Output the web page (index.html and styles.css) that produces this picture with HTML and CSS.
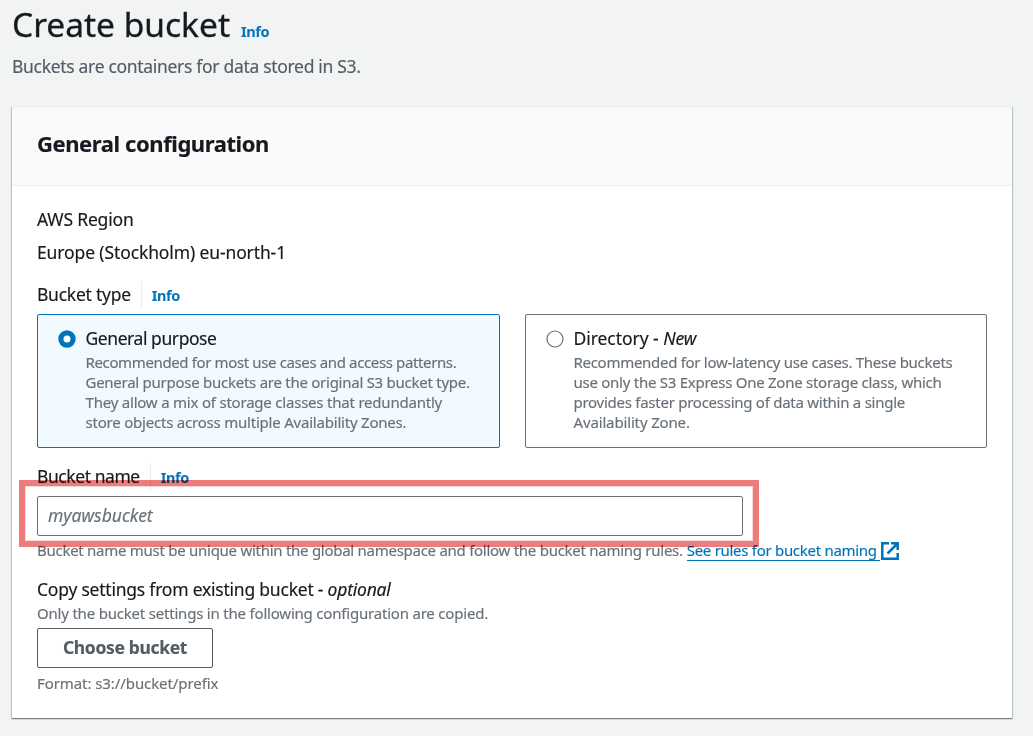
FILE: index.html
```html
<!DOCTYPE html>
<html lang="en">
<head>
<meta charset="utf-8">
<title>Create bucket</title>
<link rel="stylesheet" href="styles.css">
</head>
<body>
<main class="page">
  <header class="page-header">
    <h1 class="title"><span class="title-text">Create bucket</span> <a class="info">Info</a></h1>
    <p class="subtitle">Buckets are containers for data stored in S3.</p>
  </header>
  <section class="card">
    <div class="card-header"><h2 class="heading">General configuration</h2></div>
    <div class="card-body">
      <div class="label t-region">AWS Region</div>
      <div class="label region-value">Europe (Stockholm) eu-north-1</div>
      <div class="label-row type-row"><span class="label t-type">Bucket type</span><a class="info split">Info</a></div>
      <div class="tiles">
        <div class="tile selected">
          <svg class="radio" viewBox="0 0 18 18"><circle cx="9" cy="9" r="6.1" fill="#fff" stroke="#0073bb" stroke-width="5.2"/></svg>
          <div>
            <div class="label t-general">General purpose</div>
            <div class="hint"><span class="g1">Recommended for most use cases and access patterns.</span><br><span class="g2">General purpose buckets are the original S3 bucket type.</span><br><span class="g3">They allow a mix of storage classes that redundantly</span><br><span class="g4">store objects across multiple Availability Zones.</span></div>
          </div>
        </div>
        <div class="tile">
          <svg class="radio" viewBox="0 0 18 18"><circle cx="9" cy="9" r="8" fill="#fff" stroke="#687078" stroke-width="1.2"/></svg>
          <div>
            <div class="label t-directory">Directory - <i>New</i></div>
            <div class="hint"><span class="d1">Recommended for low-latency use cases. These buckets</span><br><span class="d2">use only the S3 Express One Zone storage class, which</span><br><span class="d3">provides faster processing of data within a single</span><br><span class="d4">Availability Zone.</span></div>
          </div>
        </div>
      </div>
      <div class="name-field">
        <div class="label-row"><span class="label t-name">Bucket name</span><a class="info split">Info</a></div>
        <div class="input">myawsbucket</div>
        <div class="hint rules"><span class="r1">Bucket name must be unique within the global namespace and follow the bucket naming rules.</span><a class="link"><span class="r2">See rules for bucket naming</span></a><svg class="external" viewBox="0 0 18 18" fill="none" stroke="#0073bb" stroke-width="2.5"><path d="M8 1.3H1.3v15.4h15.4V11M10 1.3h6.7V8M16.5 1.5L6.5 11.5"/></svg></div>
        <div class="highlight"></div>
      </div>
      <div class="label t-copy">Copy settings from existing bucket - <i>optional</i></div>
      <div class="hint t-only">Only the bucket settings in the following configuration are copied.</div>
      <button class="button">Choose bucket</button>
      <div class="hint t-format">Format: s3://bucket/prefix</div>
    </div>
  </section>
</main>
</body>
</html>
```
FILE: styles.css
```css
* { box-sizing: border-box; }
body { margin: 0; background: #f2f3f3; color: #16191f; font-family: "Noto Sans", "Open Sans", sans-serif; font-size: 17.5px; white-space: nowrap; -webkit-text-stroke: 0.15px; }
h1, h2, p { margin: 0; font-weight: 400; }
.page { height: 736px; padding: 0 21px 0 12px; overflow: hidden; }
.page-header { height: 106px; }
.title { height: 54px; display: flex; align-items: baseline; gap: 11px; font-size: 33.5px; line-height: 48px; -webkit-text-stroke: 0.3px #16191f; }
.info { color: #0073bb; font-size: 14.5px; font-weight: 700; line-height: 20px; letter-spacing: -0.4px; -webkit-text-stroke: 0; }
.subtitle { color: #545b64; line-height: 25px; letter-spacing: -0.31px; }
.card { height: 612px; background: #fff; box-shadow: 0 1px 1px #7b8788, -1px 1px 1px #c9d0d1, 1px 1px 1px #c9d0d1; }
.card-header { height: 80px; padding: 21px 25px 0; background: #fafafa; border-top: 1px solid #eaeded; border-bottom: 1px solid #eaeded; }
.heading { font-size: 22px; font-weight: 700; line-height: 30px; letter-spacing: -0.42px; }
.card-body { padding: 21px 25px 0; }
.label { height: 25px; line-height: 25px; }
.region-value { margin-top: 8px; letter-spacing: -0.12px; }
.label-row { display: flex; align-items: flex-start; height: 28px; }
.label-row .label { padding-top: 1px; }
.type-row { margin-top: 16px; }
.split { display: flex; align-items: center; height: 28px; margin-left: 10px; padding-left: 10px; border-left: 1px solid #eaeded; }
.tiles { display: grid; grid-template-columns: 463px 462px; gap: 25px; margin-top: 5px; }
.tile { display: flex; gap: 10px; height: 134px; padding: 11px 19.5px; border: 1px solid #687078; border-radius: 2px; }
.selected { background: #f1faff; border-color: #0073bb; }
.radio { width: 18px; height: 18px; margin-top: 4px; flex: none; }
.hint { color: #687078; font-size: 15px; line-height: 20px; }
.tile .hint { margin-top: 1px; }
.name-field { position: relative; margin-top: 15px; }
.input { width: 706px; height: 40px; margin-top: 5px; padding-left: 10px; border: 1px solid #687078; border-radius: 2px; color: #687078; font-style: italic; line-height: 37px; }
.rules { display: flex; align-items: center; height: 20px; margin-top: 5px; }
.r1, .r2 { position: relative; top: -1px; }
.link { height: 20px; margin-left: 4px; padding-right: 3px; color: #0073bb; border-bottom: 1px solid #0073bb; }
.external { width: 18px; height: 18px; margin-left: 1px; }
.highlight { position: absolute; left: -18px; top: 17px; width: 740px; height: 67px; border: 6px solid #ef7c7c; box-shadow: inset 0 0 0 1px #f6dada; mix-blend-mode: multiply; }
.t-copy { margin-top: 16px; letter-spacing: -0.22px; }
.t-only { margin-top: 1px; letter-spacing: -0.2px; }
.button { display: block; width: 176px; height: 40px; margin-top: 5px; padding: 0 0 2px; background: #fff; border: 1px solid #545b64; border-radius: 2px; color: #545b64; font: 700 17.5px "Noto Sans", sans-serif; letter-spacing: -0.35px; }
.t-format { margin-top: 5px; letter-spacing: -0.08px; }
.t-region { letter-spacing: -0.18px; }
.t-type { letter-spacing: -0.25px; }
.t-general { letter-spacing: -0.43px; }
.t-directory { letter-spacing: -0.05px; }
.t-name { letter-spacing: -0.43px; }
.g1 { letter-spacing: -0.37px; }
.g2, .d2, .d3 { letter-spacing: -0.26px; }
.g3, .g4 { letter-spacing: -0.21px; }
.d1, .r2 { letter-spacing: -0.29px; }
.d4 { letter-spacing: -0.15px; }
.r1 { letter-spacing: -0.27px; }
```
